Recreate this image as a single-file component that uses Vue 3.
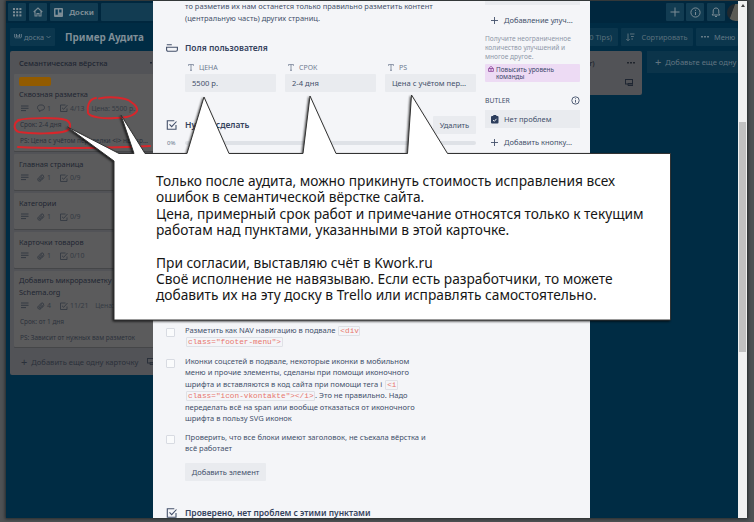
<script setup>
const cards = [
  { title: ['Сквозная разметка'], label: true, comments: 1, check: '4/13', price: 'Цена: 5500 р.', extra: ['Срок: 2-4 дня', 'PS: Цена с учётом переделки <i> на <sp...'], kind: 'first' },
  { title: ['Главная страница'], clip: 1, check: '0/9' },
  { title: ['Категории'], clip: 1, check: '0/9' },
  { title: ['Карточки товаров'], clip: 1, check: '0/10' },
  { title: ['Добавить микроразметку', 'Schema.org'], clip: 4, check: '11/21', price: 'Цена: 500 р.', extra: ['Срок: от 1 дня', 'PS: Зависит от нужных вам разметок'], kind: 'last' },
]
const fields = [
  { name: 'ЦЕНА', value: '5500 р.' },
  { name: 'СРОК', value: '2-4 дня' },
  { name: 'PS', value: 'Цена с учётом пер...' },
]
const note = [
  'Только после аудита, можно прикинуть стоимость исправления всех',
  'ошибок в семантической вёрстке сайта.',
  'Цена, примерный срок работ и примечание относятся только к текущим',
  'работам над пунктами, указанными в этой карточке.',
  '',
  'При согласии, выставляю счёт в Kwork.ru',
  'Своё исполнение не навязываю. Если есть разработчики, то можете',
  'добавить их на эту доску в Trello или исправлять самостоятельно.',
]
</script>

<template>
  <div class="page">
    <div class="window">
      <div class="board">
        <header class="topbar">
          <div class="tb sq"><svg width="9" height="9" viewBox="0 0 9 9" fill="currentColor"><template v-for="r in 3" :key="r"><rect v-for="c in 3" :key="c" :x="(c - 1) * 3.2" :y="(r - 1) * 3.2" width="2" height="2" /></template></svg></div>
          <div class="tb sq"><svg width="10" height="10" viewBox="0 0 10 10" fill="none" stroke="currentColor" stroke-width="1.1"><path d="M.7 5 5 1l4.3 4M2 4.3V9h2V6.5h2V9h2V4.3" /></svg></div>
          <div class="tb boards"><svg width="9" height="9" viewBox="0 0 9 9"><rect width="9" height="9" rx="1" fill="currentColor" /><path d="M1.5 1.5h2.3v5.2H1.5zM5.2 1.5h2.3v3H5.2z" fill="#073b58" /></svg><b>Доски</b></div>
          <div class="tb search"></div>
          <div class="spacer"></div>
          <div class="tb right"><svg width="10" height="10" viewBox="0 0 10 10" fill="none" stroke="currentColor"><path d="M5 .5v9M.5 5h9" /></svg></div>
          <div class="tb right"><svg width="11" height="11" viewBox="0 0 11 11" fill="none" stroke="currentColor"><circle cx="5.5" cy="5.5" r="4.6" /><path d="M5.5 5v3M5.5 2.8v1.1" /></svg></div>
          <div class="tb right"><svg width="10" height="11" viewBox="0 0 10 11" fill="none" stroke="currentColor"><path d="M1 8h8L7.8 6.5V4C7.8 2 6.6 1 5 1S2.200 2 2.200 4v2.500zM4 9.500h2" /></svg></div>
          <div class="avatar"></div>
        </header>
        <div class="boardbar">
          <div class="tb kind"><svg width="8" height="8" viewBox="0 0 8 8" fill="none" stroke="currentColor"><path d="M.7 1v3L2 5.500M2.500 1v3.500M4 5.500V2M5.500 1v3.500M7.300 1v3L6 5.500" /></svg><span>доска</span><svg width="5" height="4" viewBox="0 0 5 4" fill="none" stroke="currentColor" stroke-width=".8"><path d="m.5 1 2 2 2-2" /></svg></div>
          <h1>Пример Аудита</h1>
          <div class="spacer"></div>
          <div class="tb tips">(10 Tips)</div>
          <div class="tb sort"><svg width="9" height="9" viewBox="0 0 9 9" fill="none" stroke="currentColor"><path d="M2 .5v7M.3 6 2 7.800 3.700 6M4 1h4.500M5 3.500h2.800M5.300 6H7" /></svg>Сортировать</div>
          <div class="tb menu"><svg class="dots" width="8" height="2" viewBox="0 0 8 2" fill="currentColor"><path d="M0 0h2v1.500H0zM3 0h2v1.500H3zM6 0h2v1.500H6z" /></svg>Меню</div>
        </div>
        <div class="lists">
          <section class="list">
            <div class="list-head"><span>Семантическая вёрстка</span><svg class="dots" width="8" height="2" viewBox="0 0 8 2" fill="currentColor"><path d="M0 0h2v1.500H0zM3 0h2v1.500H3zM6 0h2v1.500H6z" /></svg></div>
            <article v-for="card in cards" :key="card.title[0]" class="card" :class="card.kind">
              <div v-if="card.label" class="label"></div>
              <div v-for="t in card.title" :key="t" class="title">{{ t }}</div>
              <div class="badges">
                <svg width="8" height="7" viewBox="0 0 8 7" stroke="currentColor"><path d="M0 1h7.500M0 3.300h7.500M0 5.600h5" /></svg>
                <svg v-if="card.comments" class="b-clip" width="8" height="8" viewBox="0 0 8 8" fill="none" stroke="currentColor" stroke-width=".9"><path d="M2.300 7.500V6C1 5.600.5 4.800.5 3.700.5 2 1.700 1 3.200 1h1.600c1.500 0 2.700 1 2.700 2.600S6.300 6.100 4.800 6.100z" /></svg>
                <svg v-else class="b-clip" width="8" height="8" viewBox="0 0 8 8" fill="none" stroke="currentColor" stroke-width="1"><path d="M7 3.500 4 6.600C2 8.200-.3 6 1.300 4.200L4.200 1.400c1.500-1.200 3.200.5 2 1.900L3.600 5.700c-.9.700-1.700-.2-1-1L5 2.500" /></svg>
                <span class="n">{{ card.comments || card.clip }}</span>
                <svg class="b-check" width="8" height="8" viewBox="0 0 8 8" fill="none" stroke="currentColor" stroke-width=".9"><path d="M5.500 1h-5v6.500H7V4.500M2 3.800l1.700 1.500L7.500 1" /></svg>
                <span>{{ card.check }}</span>
                <span v-if="card.price" class="price">{{ card.price }}</span>
              </div>
              <div v-for="e in card.extra" :key="e" class="extra">{{ e }}</div>
            </article>
            <div class="add"><span class="plus">+</span><span>Добавить еще одну карточку</span><svg width="8" height="7" viewBox="0 0 8 7" fill="none" stroke="currentColor"><rect x=".5" y=".5" width="7" height="4.500" /><path d="M3 4.500h5v2H3z" /></svg></div>
          </section>
          <section class="list other">
            <div class="list-head"><span>card cover)</span><svg class="dots" width="8" height="2" viewBox="0 0 8 2" fill="currentColor"><path d="M0 0h2v1.500H0zM3 0h2v1.500H3zM6 0h2v1.500H6z" /></svg></div>
            <svg class="tpl" width="8" height="7" viewBox="0 0 8 7" fill="none" stroke="currentColor"><rect x=".5" y=".5" width="7" height="4.500" /><path d="M3 4.500h5v2H3z" /></svg>
          </section>
          <div class="new-list"><span class="plus">+</span>Добавьте еще одну</div>
        </div>
      </div>
      <div class="scrollbar"><i class="up"></i><div class="thumb"></div></div>

      <div class="modal">
        <main class="main">
          <p class="desc">то разметив их нам останется только правильно разметить контент<br>(центральную часть) других страниц.</p>
          <div class="row h-fields">
            <svg width="12" height="8" viewBox="0 0 12 8" fill="none" stroke="currentColor" stroke-width="1.100"><path d="M.6 3.200h10.800v2.600q0 1.500-1.500 1.500H2.100Q.6 7.300.6 5.800zM.8 .8h5" /></svg>
            <h2>Поля пользователя</h2>
          </div>
          <div class="fields">
            <div v-for="f in fields" :key="f.name" class="field">
              <div class="fname"><svg width="6" height="7" viewBox="0 0 6 7" fill="none" stroke="currentColor" stroke-width=".8"><path d="M.4 1.800V.6h5.200v1.200M3 .6v5.600M2 6.300h2" /></svg>{{ f.name }}</div>
              <div class="fval">{{ f.value }}</div>
            </div>
          </div>
          <div class="row h-todo">
            <svg width="11" height="10" viewBox="0 0 11 10" fill="none" stroke="currentColor" stroke-width="1.100"><path d="M7.800.8H.8v8.400h8.700V5M3 4.400l2.200 2.300L10 1.500" /></svg>
            <h2>Нужно сделать</h2>
            <button>Удалить</button>
          </div>
          <div class="progress"><span>0%</span><div class="bar"></div></div>
          <ul class="checks">
            <li><i class="box"></i><div>Разметить как NAV навигацию в подвале <code>&lt;div<br>class="footer-menu"&gt;</code></div></li>
            <li><i class="box"></i><div>Иконки соцсетей в подвале, некоторые иконки в мобильном<br>меню и прочие элементы, сделаны при помощи иконочного<br>шрифта и вставляются в код сайта при помощи тега i <code>&lt;i<br>class="icon-vkontakte"&gt;&lt;/i&gt;</code>. Это не правильно. Надо<br>переделать всё на span или вообще отказаться от иконочного<br>шрифта в пользу SVG иконок</div></li>
            <li><i class="box"></i><div>Проверить, что все блоки имеют заголовок, не съехала вёрстка и<br>всё работает</div></li>
          </ul>
          <button class="add-item">Добавить элемент</button>
          <div class="row h-done">
            <svg width="11" height="10" viewBox="0 0 11 10" fill="none" stroke="currentColor" stroke-width="1.100"><path d="M7.800.8H.8v8.400h8.700V5M3 4.400l2.200 2.300L10 1.500" /></svg>
            <h2>Проверено, нет проблем с этими пунктами</h2>
          </div>
        </main>
        <aside class="side">
          <div class="stub"></div>
          <div class="link l1"><svg width="7" height="7" viewBox="0 0 7 7" stroke="currentColor" stroke-width=".9"><path d="M3.500 0v7M0 3.500h7" /></svg>Добавление улуч...</div>
          <p>Получите неограниченное<br>количество улучшений и<br>многое другое.</p>
          <div class="upgrade"><svg width="6" height="6" viewBox="0 0 6 6" fill="none" stroke="#8f4a9c" stroke-width=".9"><path d="M.6 2.500h4.800v2.900H.6zM1.300 2.500C1.300 0 4.700 0 4.700 2.500M2 4h2" /></svg><span>Повысить уровень<br>команды</span></div>
          <div class="butler"><span>BUTLER</span><svg width="9" height="9" viewBox="0 0 9 9" fill="none" stroke="currentColor" stroke-width=".9"><circle cx="4.500" cy="4.500" r="3.700" /><path d="M4.500 4v2.600M4.500 2.300v.9" /></svg></div>
          <div class="side-btn"><svg width="8" height="9" viewBox="0 0 8 9"><rect y="1" width="7.500" height="7.500" rx="1" fill="#2c3d5c" /><rect x="2.300" width="3" height="2" fill="#2c3d5c" /><path d="m2 5 1.300 1.300 2.200-2.500" fill="none" stroke="#fff" stroke-width=".9" /></svg>Нет проблем</div>
          <div class="link l2"><svg width="7" height="7" viewBox="0 0 7 7" stroke="currentColor" stroke-width=".9"><path d="M3.500 0v7M0 3.500h7" /></svg>Добавить кнопку...</div>
        </aside>
      </div>
    </div>

    <svg class="overlay" width="754" height="522" viewBox="0 0 754 522" fill="none">
      <g stroke="#d8262b" stroke-width="2" stroke-linecap="round">
        <path d="M99 98.500C112 96 127 98 131 102c5 3 7 7 6 9-3 5-12 7-22 7-12 1-25-1-27-5-1-5 0-14 8-15" />
        <path d="M18 120c10-2 37-3 48 0 6 3 5 9 0 11-8 3-35 3-47 1-6-2-6-10 1-12" />
        <path d="M18 147c31 2 94 1 132-1" />
      </g>
      <path class="bubble" d="M67.500 127 119 153.500H134L121 115l24 38.500h42L204 97l25 56.500h74L310 96l26 57.500h71.500L411.500 95l36 58.500H670.500v166.500H114V161z" fill="#fff" stroke="#333" stroke-width="1" />
    </svg>
    <div class="note"><div v-for="(l, i) in note" :key="i" class="nline">{{ l }}</div></div>
  </div>
</template>

<style>
body { overflow: hidden; }
</style>

<style scoped>
* { box-sizing: border-box; }
.page { position: relative; width: 754px; height: 522px; background: #4f5254; padding: 1px 7px 4px 6px; overflow: hidden; font-family: "Noto Sans", "Open Sans", sans-serif; }
.window { position: relative; display: flex; width: 741px; height: 517px; box-shadow: 0 0 3px 1px #24282a; }
.board { width: 732px; height: 517px; background: #002c44; overflow: hidden; white-space: nowrap; }
.spacer { flex: 1; }
.topbar { display: flex; align-items: center; gap: 3px; height: 22px; padding-left: 2px; background: #00273e; }
.tb { display: flex; align-items: center; justify-content: center; height: 18px; border-radius: 1px; background: #123c52; color: #7c8c95; font-size: 7.700px; flex: none; }
.sq { width: 18px; }
.boards { width: 48px; gap: 6px; }
.search { width: 70px; }
.right { width: 18px; margin-right: -.5px; }
.avatar { width: 11px; height: 17px; border-radius: 9px 0 0 9px; background: linear-gradient(110deg, #20282e 45%, #5a5a54 50%); }
.boardbar { display: flex; align-items: center; height: 28px; padding-left: 4px; gap: 3px; }
.boardbar .tb { background: #0b364d; }
.boardbar .kind { width: 45px; gap: 2px; font-size: 7.300px; color: #647b89; }
h1 { margin: 0 0 0 7px; font-size: 9.900px; line-height: 18px; font-weight: 700; color: #7f8e97; }
.boardbar .tips { width: 100px; justify-content: flex-end; padding-right: 6px; color: #5a707c; font-size: 7.500px; }
.boardbar .sort { width: 72px; gap: 6px; color: #5a707c; font-size: 7.400px; }
.boardbar .menu { width: 42px; gap: 5px; justify-content: flex-start; padding-left: 5px; color: #637985; font-size: 7.400px; }
.dots { flex: none; }
.lists { display: flex; align-items: flex-start; padding: 0 0 0 4px; }
.list { flex: none; width: 149px; height: 324px; padding: 0 4px; border-radius: 2px; background: #525357; color: #1f2632; }
.list-head { display: flex; align-items: center; justify-content: space-between; height: 23px; padding: 0 0 0 5px; font-size: 7.550px; font-weight: 500; }
.list-head .dots { margin-right: -3px; }
.card { width: 144px; height: 36px; margin-bottom: 3px; padding: 4px 0 0 5px; border-radius: 1px; background: #5b5b5c; box-shadow: 0 1px 0 #454648; font-size: 7.400px; }
.card.first { height: 76.500px; padding-top: 3px; }
.card.last { height: 76.500px; padding-top: 3.500px; }
.label { width: 32px; height: 9px; margin-bottom: 2px; border-radius: 2px; background: #925b00; }
.title { line-height: 12px; height: 11.500px; }
.badges { display: flex; align-items: center; height: 17px; padding-left: 2px; color: #343a43; font-size: 6.900px; }
.b-clip { margin: 0 2.500px 0 7.500px; }
.n { width: 13px; }
.b-check { margin-right: 2px; }
.price { font-size: 6.800px; margin-left: 7px; }
.extra { height: 16px; line-height: 16px; padding-left: 1px; font-size: 6.450px; color: #2b313b; }
.add { display: flex; align-items: center; height: 23px; padding-left: 7px; gap: 4px; font-size: 7.600px; color: #2a303a; }
.add svg { margin-left: 5px; flex: none; }
.plus { font-size: 11px; line-height: 10px; }
.list.other { width: 148px; height: 44px; margin-left: 335px; }
.list.other .list-head { padding-left: 57px; color: #20252d; }
.list.other .list-head .dots { margin-right: 3px; }
.tpl { display: block; margin: 5px 5px 0 auto; }
.new-list { display: flex; align-items: center; flex: none; width: 91px; height: 22px; margin-left: 5px; padding-left: 8px; gap: 4px; background: #0b344a; color: #627581; font-size: 7.600px; }
.scrollbar { display: flex; flex-direction: column; align-items: center; width: 9px; height: 517px; background: #f0f0f0; }
.up { width: 0; height: 0; margin-top: 3px; border: 2px solid transparent; border-top: 0; border-bottom: 3px solid #444; }
.thumb { width: 7px; height: 230px; margin-top: 115px; background: #c1c1c1; }

.modal { position: absolute; left: 147px; top: 0; display: flex; width: 437px; height: 517px; background: #f4f5f8; color: #43506a; overflow: hidden; white-space: nowrap; }
.main { width: 323px; padding-left: 13px; }
.desc { margin: 0 0 0 19px; font-size: 7.510px; line-height: 11.500px; height: 24px; }
.row { display: flex; align-items: center; }
.row svg { flex: none; width: 12px; margin-right: 7px; }
h2 { margin: 0; font-size: 8.480px; font-weight: 600; color: #34425d; line-height: 18px; }
.h-fields { height: 18px; margin-top: 14px; }
.fields { display: flex; gap: 9px; padding: 3px 0 0 19px; }
.field { width: 91px; }
.fname { display: flex; align-items: center; gap: 5px; height: 14px; padding-left: 3px; font-size: 7px; color: #6f7b91; }
.fval { height: 18px; line-height: 19px; padding-left: 7px; border-radius: 1px; background: #e9ebef; font-size: 7.600px; }
.h-todo { height: 18px; margin-top: 23.500px; }
button { margin: 0; padding: 0; border: 0; border-radius: 1px; background: #e9ebef; color: #43506a; font-family: inherit; font-size: 7.560px; }
.h-todo button { width: 43px; height: 18px; margin-left: auto; }
.progress { display: flex; align-items: center; height: 18px; font-size: 6px; color: #66738a; }
.progress span { width: 19px; padding-left: 1px; }
.bar { width: 291px; height: 4px; border-radius: 2px; background: #dfe2e7; }
.checks { margin: 173px 0 0; padding: 0; list-style: none; font-size: 7.570px; line-height: 11.600px; }
.checks li { display: flex; height: 31px; }
.checks li:nth-child(2) { height: 76px; }
.checks li:nth-child(3) { height: 31px; }
.box { flex: none; width: 9px; height: 9px; margin: 3px 10px 0 0; border: 1px solid #d8dbe2; border-radius: 1px; background: #fafbfc; }
code { font-family: "Liberation Mono", monospace; font-size: 7.750px; line-height: 9px; color: #e8766d; border: 1px solid #dfe1e6; border-radius: 1px; padding: 0 .5px 0 1px; margin-left: 1px; -webkit-box-decoration-break: clone; box-decoration-break: clone; }
.add-item { display: block; width: 81px; height: 18px; margin: 0 0 0 19px; }
.h-done { height: 18px; margin-top: 23px; }
.side { width: 114px; padding-left: 9px; }
.stub { width: 95px; height: 4px; background: #e9ebef; }
.link { display: flex; align-items: center; height: 18px; gap: 6px; padding-left: 6px; font-size: 7.500px; }
.l1 { margin-top: 6px; }
.side p { margin: 4.500px 0 0; font-size: 6.600px; line-height: 9.200px; color: #8f98a8; height: 29px; }
.upgrade { display: flex; width: 95px; height: 18px; margin-top: 1px; padding: 2px 0 0 3px; gap: 2px; background: #eddbf4; border-radius: 1px; font-size: 6.450px; line-height: 7px; color: #3a466a; }
.butler { display: flex; align-items: center; justify-content: space-between; width: 95px; height: 18px; margin-top: 10px; font-size: 6.800px; }
.side-btn { display: flex; align-items: center; width: 95px; height: 18px; margin-top: .5px; padding-left: 6px; gap: 5px; background: #e9ebef; font-size: 7.500px; }
.l2 { margin-top: 5px; }

.overlay { position: absolute; left: 0; top: 0; }
.bubble { filter: drop-shadow(-1px 1px 1px rgba(0, 0, 0, .75)); }
.note { position: absolute; left: 156px; top: 173px; font-size: 13.720px; color: #161616; white-space: nowrap; }
.nline { height: 16.350px; line-height: 16.350px; }
</style>
